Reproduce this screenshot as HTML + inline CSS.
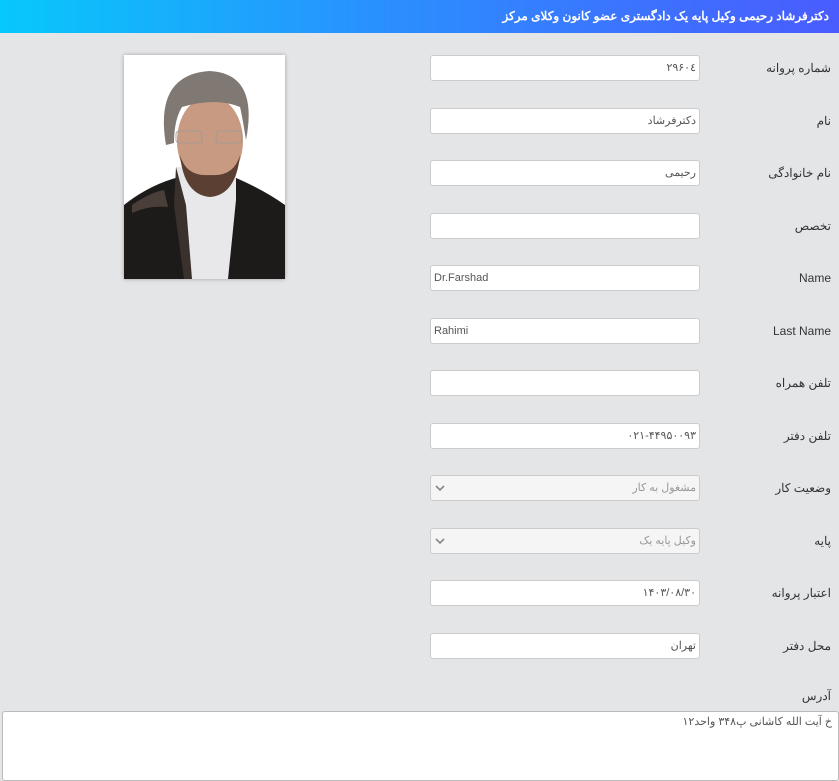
<!DOCTYPE html>
<html><head><meta charset="utf-8"><style>
*{margin:0;padding:0;box-sizing:border-box}
body{width:839px;height:779px;overflow:hidden;background:#e4e5e7;font-family:"Liberation Sans","Noto Sans CJK SC",sans-serif;position:relative;direction:rtl}
.hdr{position:absolute;left:0;top:0;width:839px;height:33px;background:linear-gradient(90deg,#07c8fa 0%,#2a90fe 45%,#4a5cfe 100%);color:#fff;font-size:12px;font-weight:bold;line-height:33px;padding-right:10px;text-align:right}
.lbl{position:absolute;right:8px;font-size:12px;color:#333;text-align:right}
.inp{position:absolute;left:430px;width:270px;height:26px;background:#fff;border:1px solid #ccc;border-radius:3px;font-size:11px;color:#555;line-height:24px;padding:0 3px;text-align:right}
.sel{background:#f5f5f5;color:#999}
.ltr{text-align:left;direction:ltr}
.chev{position:absolute;left:4px;top:8px}
.photo{position:absolute;left:124px;top:55px;width:161px;height:224px;box-shadow:0 0 4px rgba(0,0,0,.3)}
.ta{position:absolute;left:2px;top:711px;width:837px;height:70px;background:#fff;border:1px solid #bbb;border-radius:3px;font-size:11px;color:#555;padding:3px 6px;text-align:right}
</style></head><body>
<div class="hdr">دکترفرشاد رحیمی وکیل پایه یک دادگستری عضو کانون وکلای مرکز</div>

<svg class="photo" viewBox="0 0 161 224" width="161" height="224">
<rect width="161" height="224" fill="#fff"/>
<path d="M0 150 Q25 130 55 122 L110 122 Q140 135 161 150 L161 224 L0 224Z" fill="#1d1a1a"/>
<path d="M8 150 Q25 138 40 135 L44 152 Q25 150 8 158Z" fill="#4a3f38"/>
<path d="M52 112 L112 112 L112 145 L104 224 L66 224 L60 145Z" fill="#e8e8ea"/>
<path d="M52 112 L62 150 L68 224 L60 224 L50 150Z" fill="#3a312c"/>
<ellipse cx="86" cy="86" rx="33" ry="45" fill="#c89a82"/>
<path d="M56 100 Q60 140 86 142 Q112 140 116 100 Q110 122 86 120 Q62 122 56 100Z" fill="#5a3f32"/>
<path d="M42 90 Q30 20 85 16 Q135 18 122 85 Q118 60 116 52 Q92 42 58 52 Q50 65 50 88Z" fill="#807873"/>
<rect x="52" y="76" width="26" height="12" rx="3" fill="none" stroke="#999" stroke-width="0.8"/>
<rect x="92" y="76" width="26" height="12" rx="3" fill="none" stroke="#999" stroke-width="0.8"/>
</svg>

<div class="lbl" style="top:61px">شماره پروانه</div><div class="inp" style="top:55px">۲۹۶۰٤</div>
<div class="lbl" style="top:114px">نام</div><div class="inp" style="top:108px">دکترفرشاد</div>
<div class="lbl" style="top:166px">نام خانوادگی</div><div class="inp" style="top:160px">رحیمی</div>
<div class="lbl" style="top:219px">تخصص</div><div class="inp" style="top:213px"></div>
<div class="lbl" style="top:271px">Name</div><div class="inp ltr" style="top:265px">Dr.Farshad</div>
<div class="lbl" style="top:324px">Last Name</div><div class="inp ltr" style="top:318px">Rahimi</div>
<div class="lbl" style="top:376px">تلفن همراه</div><div class="inp" style="top:370px"></div>
<div class="lbl" style="top:429px">تلفن دفتر</div><div class="inp" style="top:423px">۰۲۱-۴۴۹۵۰۰۹۳</div>
<div class="lbl" style="top:481px">وضعیت کار</div><div class="inp sel" style="top:475px">مشغول به کار<svg class="chev" width="10" height="8" viewBox="0 0 10 8"><path d="M1 2 L5 6 L9 2" stroke="#888" stroke-width="1.6" fill="none"/></svg></div>
<div class="lbl" style="top:534px">پایه</div><div class="inp sel" style="top:528px">وکیل پایه یک<svg class="chev" width="10" height="8" viewBox="0 0 10 8"><path d="M1 2 L5 6 L9 2" stroke="#888" stroke-width="1.6" fill="none"/></svg></div>
<div class="lbl" style="top:586px">اعتبار پروانه</div><div class="inp" style="top:580px">۱۴۰۳/۰۸/۳۰</div>
<div class="lbl" style="top:639px">محل دفتر</div><div class="inp" style="top:633px">تهران</div>
<div class="lbl" style="top:689px">آدرس</div>
<div class="ta">خ آیت الله کاشانی  پ۳۴۸ واحد۱۲</div>
</body></html>
